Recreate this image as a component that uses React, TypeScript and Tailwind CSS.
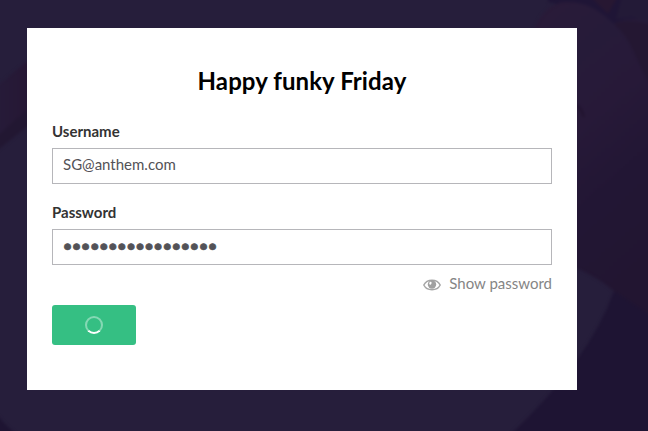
import React from "react";

function Backdrop() {
  return (
    <svg className="absolute inset-0 h-full w-full" viewBox="0 0 648 431" preserveAspectRatio="none" aria-hidden="true">
      <defs>
        <linearGradient id="petal" x1="0" y1="0" x2="0.35" y2="1">
          <stop offset="0" stopColor="#2a1a38" />
          <stop offset="0.25" stopColor="#261b39" />
          <stop offset="0.45" stopColor="#271938" />
          <stop offset="0.7" stopColor="#221634" />
          <stop offset="1" stopColor="#221531" />
        </linearGradient>
        <linearGradient id="stem" x1="0" y1="0" x2="1" y2="0">
          <stop offset="0" stopColor="#261b39" />
          <stop offset="1" stopColor="#261633" />
        </linearGradient>
        <filter id="soft" colorInterpolationFilters="sRGB">
          <feGaussianBlur stdDeviation="1.5" />
        </filter>
      </defs>
      <rect width="648" height="431" fill="#261e3b" />
      <g filter="url(#soft)">
        <path d="M548 -4 L660 -4 V60 H600 Q575 4 548 2Z" fill="#1f1536" />
        <path d="M590 -4 L608 14 L618 -4Z" fill="#271732" />
        <path d="M622 -4 L660 -4 V26 L632 17 L616 19Z" fill="#231a37" />
        <path d="M530 40 Q542 2 567 2 C590 2 603 14 614 24 Q628 14 660 24 V322 L614 291 Q598 277 570 265 L540 250Z" fill="url(#petal)" />
        <path d="M614 24 Q628 17 660 27 V100 Q642 72 634 52Q627 35 614 24Z" fill="#241732" />
        <path d="M577 105 Q582 110 584 117" fill="none" stroke="#20122d" strokeWidth="2" />
        <path d="M614 291 L660 322 V440 H505 Q590 360 614 291Z" fill="#1e1433" />
        <path d="M-5 88 L35 55 V120 L-5 152Z" fill="url(#stem)" />
        <path d="M-5 138 L35 103 V120 L-5 152Z" fill="#221732" />
        <path d="M-5 412 Q5 426 19 436 H-5Z" fill="#1e1432" />
      </g>
    </svg>
  );
}

function EyeIcon() {
  return (
    <svg className="mt-[3px] h-3 w-[18px]" viewBox="0 0 18 12" aria-hidden="true">
      <path d="M.8 6C4 -.35 14 -.35 17.2 6C14 12.35 4 12.35 .8 6Z" fill="none" stroke="#a6a6a6" strokeWidth="1.5" />
      <circle cx="9" cy="5.5" r="4.2" fill="#a0a0a0" />
      <ellipse cx="7.4" cy="4.2" rx="1.1" ry="1.5" fill="#fff" transform="rotate(25 7.4 4.2)" />
    </svg>
  );
}

const field =
  "block h-9 w-full border border-[#b6b6ba] bg-white px-2.5 text-[15px] leading-5 text-[#535257] outline-none";

export default function App() {
  return (
    <div className="relative h-[431px] w-[648px] overflow-hidden pt-7 pl-[27px] font-['Lato',sans-serif] text-[15px]">
      <Backdrop />
      <main className="relative h-[362px] w-[550px] bg-white px-[25px] pt-[38px]">
        <h1 className="text-center text-2xl leading-[30px] font-bold tracking-[0.08px] text-black">Happy funky Friday</h1>
        <form>
          <label className="mt-[25px] block leading-5 font-bold text-[#333]" htmlFor="username">Username</label>
          <input id="username" className={`${field} mt-[7px] pb-[4px]`} defaultValue="SG@anthem.com" />
          <label className="mt-[18px] block leading-5 font-bold text-[#333]" htmlFor="password">Password</label>
          <input id="password" className={`${field} mt-[7px] pb-[4px] font-['Liberation_Sans',sans-serif] [-webkit-text-stroke:0.7px_#535257]`} defaultValue="●●●●●●●●●●●●●●●●●" />
          <div className="mt-2 flex items-center justify-end gap-2 leading-5 text-[#858585]">
            <EyeIcon />
            <span>Show password</span>
          </div>
          <button type="button" aria-label="Signing in" className="mt-3 flex h-10 w-[84px] items-center justify-center rounded-[3px] bg-[#35bf83]">
            <span className="size-[18px] rounded-full border-2 border-white/40 border-b-white" />
          </button>
        </form>
      </main>
    </div>
  );
}
